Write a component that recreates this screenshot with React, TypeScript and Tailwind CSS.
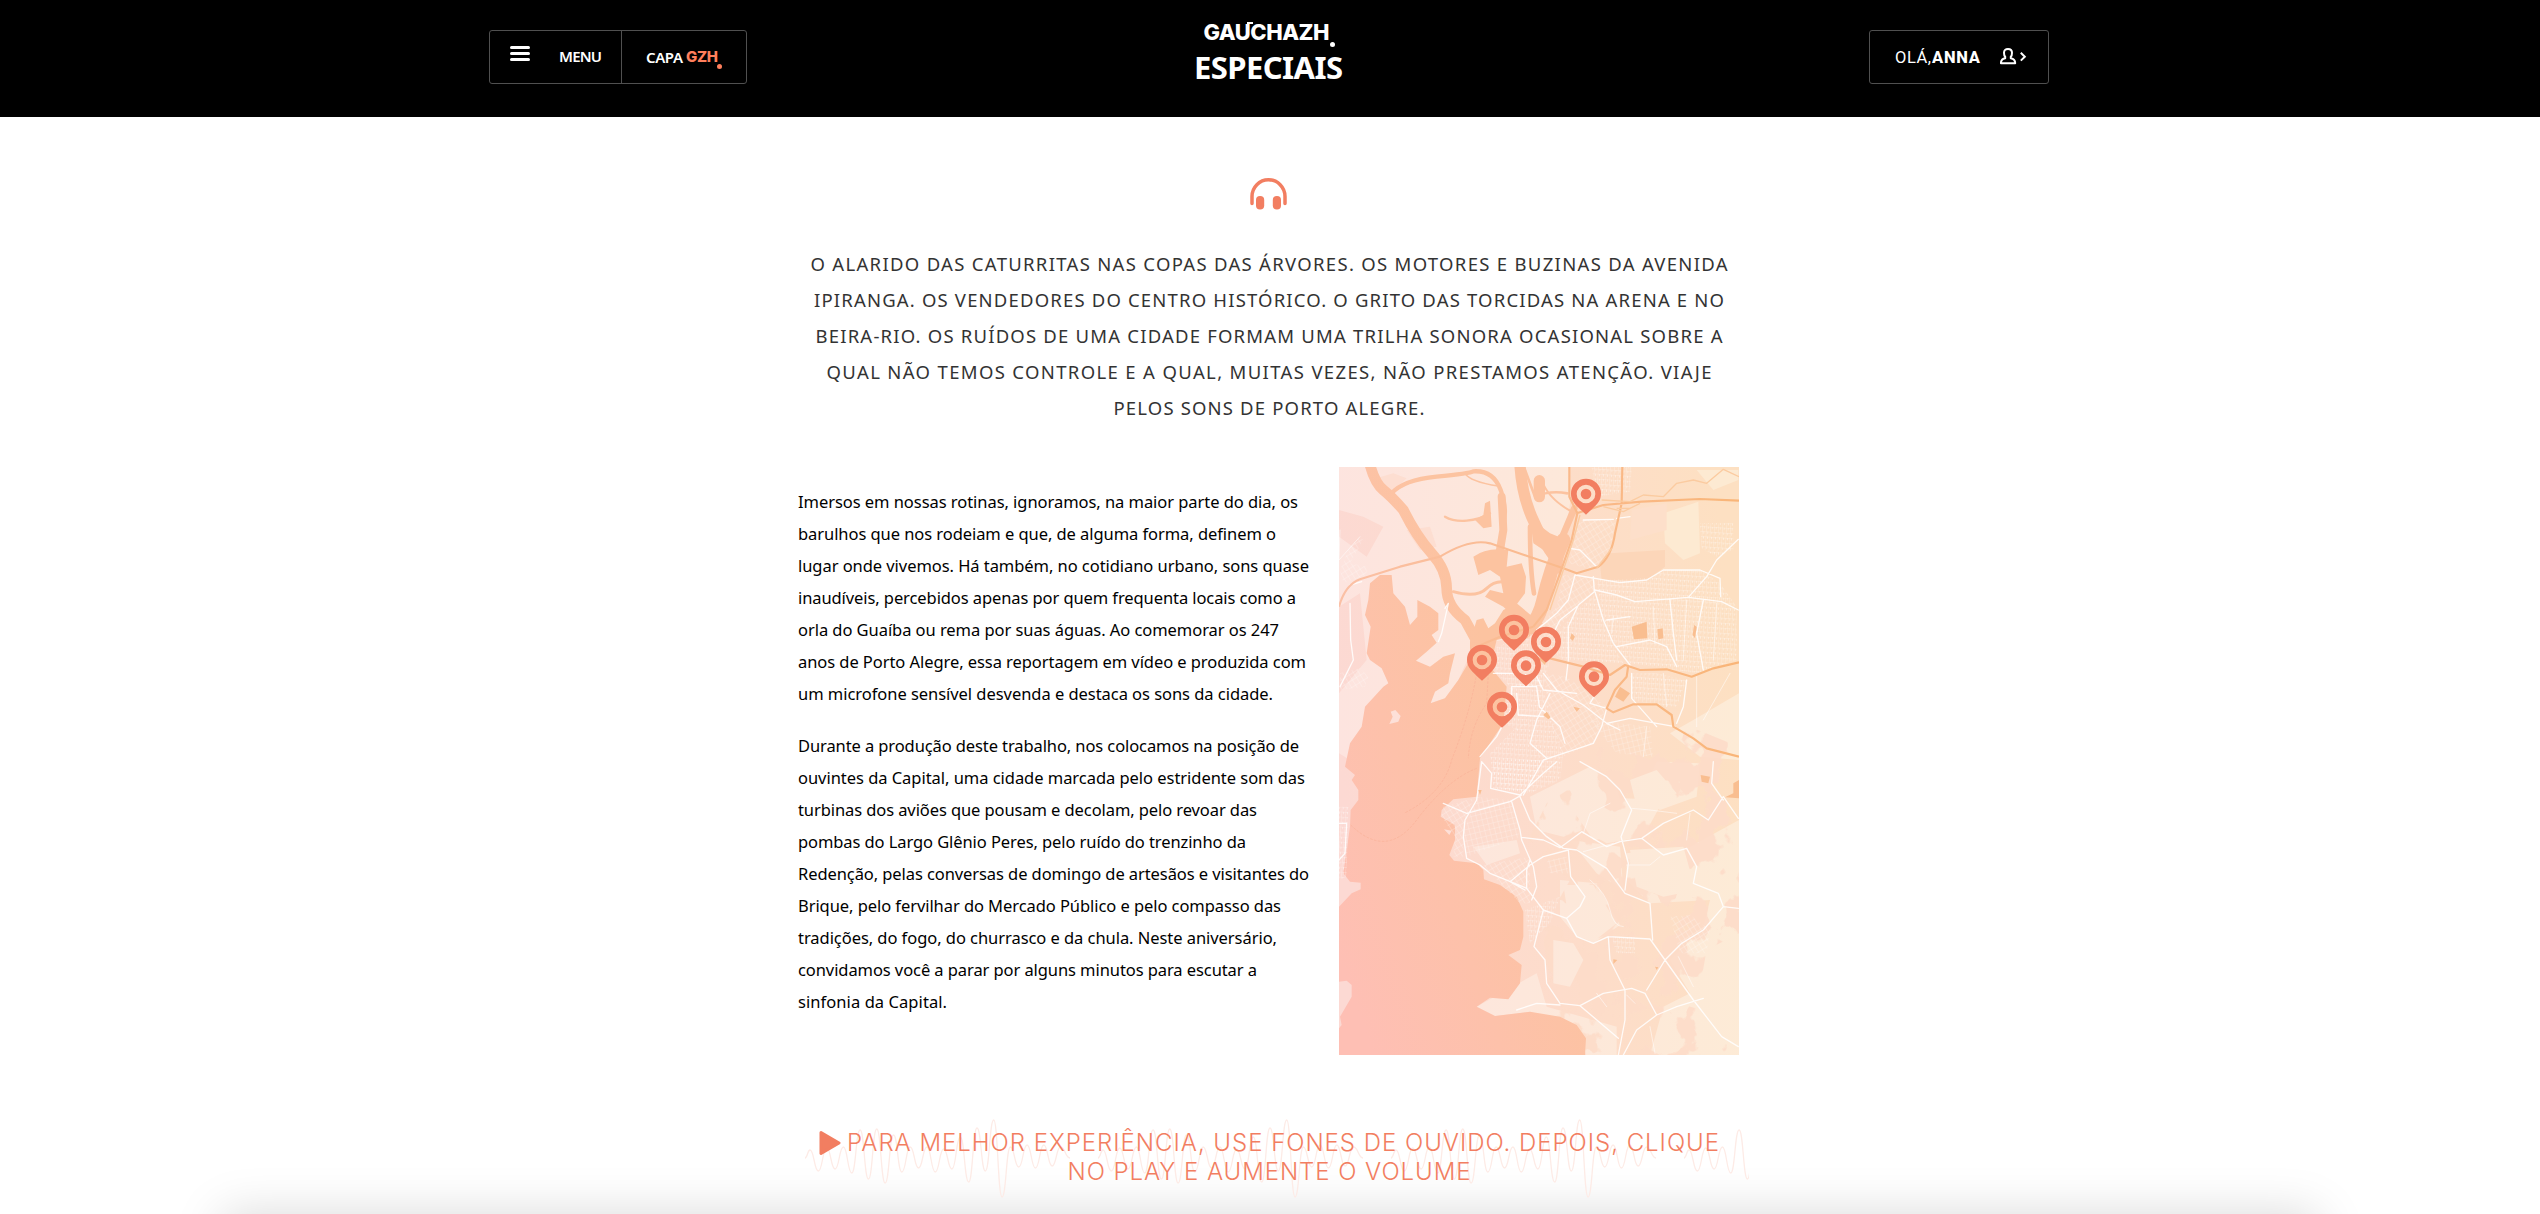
import { useLayoutEffect, useRef } from "react";

/* One line of text whose tracking is adjusted so that it fills the given width. */
function Fit({ w, children, className = "" }: { w: number; children: string; className?: string }) {
  const ref = useRef<HTMLSpanElement>(null);
  useLayoutEffect(() => {
    const el = ref.current;
    if (!el) return;
    el.style.letterSpacing = "0px";
    const natural = el.getBoundingClientRect().width;
    const gap = (w - natural) / Math.max(1, children.length - 1);
    el.style.letterSpacing = `${gap}px`;
    el.style.marginRight = `${-gap}px`;
  }, [w, children]);
  return (
    <span ref={ref} className={`inline-block whitespace-nowrap ${className}`}>
      {children}
    </span>
  );
}

const intro: [string, number][] = [
  ["O ALARIDO DAS CATURRITAS NAS COPAS DAS ÁRVORES. OS MOTORES E BUZINAS DA AVENIDA", 917],
  ["IPIRANGA. OS VENDEDORES DO CENTRO HISTÓRICO. O GRITO DAS TORCIDAS NA ARENA E NO", 910],
  ["BEIRA-RIO. OS RUÍDOS DE UMA CIDADE FORMAM UMA TRILHA SONORA OCASIONAL SOBRE A", 907],
  ["QUAL NÃO TEMOS CONTROLE E A QUAL, MUITAS VEZES, NÃO PRESTAMOS ATENÇÃO. VIAJE", 885],
  ["PELOS SONS DE PORTO ALEGRE.", 311],
];

const paragraphs: [string, number][][] = [
  [
    ["Imersos em nossas rotinas, ignoramos, na maior parte do dia, os", 500],
    ["barulhos que nos rodeiam e que, de alguma forma, definem o", 478],
    ["lugar onde vivemos. Há também, no cotidiano urbano, sons quase", 511],
    ["inaudíveis, percebidos apenas por quem frequenta locais como a", 498],
    ["orla do Guaíba ou rema por suas águas. Ao comemorar os 247", 481],
    ["anos de Porto Alegre, essa reportagem em vídeo e produzida com", 508],
    ["um microfone sensível desvenda e destaca os sons da cidade.", 475],
  ],
  [
    ["Durante a produção deste trabalho, nos colocamos na posição de", 501],
    ["ouvintes da Capital, uma cidade marcada pelo estridente som das", 507],
    ["turbinas dos aviões que pousam e decolam, pelo revoar das", 459],
    ["pombas do Largo Glênio Peres, pelo ruído do trenzinho da", 448],
    ["Redenção, pelas conversas de domingo de artesãos e visitantes do", 511],
    ["Brique, pelo fervilhar do Mercado Público e pelo compasso das", 483],
    ["tradições, do fogo, do churrasco e da chula. Neste aniversário,", 479],
    ["convidamos você a parar por alguns minutos para escutar a", 459],
    ["sinfonia da Capital.", 149],
  ],
];

const pins = [
  [768, 102],
  [552, 510],
  [648, 546],
  [456, 600],
  [588, 617],
  [792, 650],
  [516, 741],
];

/* Neighbourhoods: outline and street pattern. */
const districts: [string, string][] = [
  ["M745 180L858 178L840 270L790 330L715 310Z", "url(#g2)"],
  ["M785 21L905 21L900 95L800 110Z", "url(#g1)"],
  ["M700 345L800 355L790 400L740 440L640 560L610 520L680 440Z", "url(#g2)"],
  ["M800 360L960 355L1000 330L1110 330L1170 370L1220 440L1220 600L1100 640L900 610L850 560L820 480Z", "url(#g1)"],
  ["M1110 190L1210 190L1210 270L1160 290L1115 265Z", "url(#g1)"],
  ["M740 450L800 400L850 560L880 610L700 600L650 560Z", "url(#g1)"],
  ["M500 560L610 520L660 600L640 680L540 680L490 630Z", "url(#g1)"],
  ["M540 680L630 650L660 760L560 810L520 790Z", "url(#g1)"],
  ["M640 640L710 650L830 740L790 850L700 890L660 780Z", "url(#g2)"],
  ["M560 800L660 770L700 880L690 960L600 1000L490 980L480 880Z", "url(#g1)"],
  ["M900 640L980 640L1070 660L1040 740L980 735L905 720Z", "url(#g1)"],
  ["M780 780L960 800L970 890L860 880Z", "url(#g3)"],
  ["M440 1010L545 1020L570 1130L410 1190L400 1120Z", "url(#g3)"],
  ["M340 1040L430 1015L405 1090L400 1190L370 1190L375 1130L335 1070Z", "url(#g2)"],
  ["M490 900L640 900L580 1000L490 985Z", "url(#g1)"],
  ["M460 1215L600 1190L600 1300L600 1330L570 1330L500 1260Z", "url(#g2)"],
  ["M650 1200L710 1190L715 1240L660 1240Z", "url(#g3)"],
  ["M585 1350L690 1310L660 1390L600 1450Z", "url(#g1)"],
  ["M845 1430L915 1430L915 1480L860 1480Z", "url(#g1)"],
  ["M1020 1370L1080 1365L1140 1410L1130 1480L1050 1480Z", "url(#g2)"],
  ["M27 1040L55 1040L50 1250L27 1260Z", "url(#g1)"],
  ["M60 260L90 230L100 240L60 310L110 320L110 345L40 370L30 330Z", "url(#g2)"],
  ["M30 640L90 625L115 650L105 680L30 690Z", "url(#g2)"],
];

const avenues = [
  "M795 390L860 405L915 425L1075 412L1175 425L1225 450",
  "M735 345L870 368L950 360L1000 330L1110 330L1170 355L1172 410",
  "M1075 412L1130 350L1160 300L1225 238",
  "M795 395L820 480L850 550L900 615",
  "M790 350L793 395L745 435L715 500L715 600L708 660",
  "M670 520L690 480L740 440",
  "M620 510L680 460L715 420L735 345",
  "M450 890L500 830L545 745L545 680L620 680L628 740L690 800L705 850",
  "M490 640L545 640L620 650L640 690L740 700",
  "M640 640L680 690L760 735L830 790L870 810",
  "M560 700L565 765L640 770",
  "M660 700L620 780L600 850L650 895",
  "M820 660L780 730L830 745L815 800L790 850L700 880L640 900L580 1005",
  "M830 480L900 470M860 560L960 540L1010 560L1040 620",
  "M1020 420L1030 520L1040 600",
  "M1120 420L1100 520L1120 630",
  "M905 640L905 715L980 800",
  "M1070 660L1060 740L1040 790",
  "M760 180L850 178M720 265L750 270L800 320M860 175L900 170",
  "M830 790L900 775L980 790L1035 800",
  "M60 430L62 540L70 600L30 680M60 375L95 365",
  "M345 445L355 430L335 520L325 545",
  "M455 905L440 1020L405 1080L400 1130L410 1195L450 1215L480 1240L590 1285L640 1350L710 1375L740 1430L790 1450L835 1430L960 1437L1005 1500L1090 1620L1175 1730L1225 1760",
  "M455 905L485 940L482 985L570 1005L640 940L680 905",
  "M340 1030L410 1060L540 1025L575 1005",
  "M545 1025L570 1110L575 1140L610 1220L620 1280L605 1320",
  "M570 1010L600 1080L650 1130L700 1165L740 1170L830 1225L885 1300L960 1330L968 1440",
  "M575 1132L640 1140L690 1163L755 1115L830 1160L870 1145L935 1135L1000 1090L1090 1050L1135 1080L1180 1010L1225 1075",
  "M750 905L830 950L870 990L905 1050L873 1130L895 1210L885 1290",
  "M935 1135L1000 1185L1070 1165L1100 1220L1090 1270L1165 1300L1180 1340L1120 1410L1055 1450L1005 1500L950 1590",
  "M1180 1340L1225 1345M1150 905L1145 970L1180 1020",
  "M540 1265L600 1215L640 1190L715 1170L722 1250L765 1310L750 1340L710 1375",
  "M640 1350L612 1460L645 1500L650 1570L690 1630L750 1637L865 1735",
  "M750 1637L820 1600L905 1585L945 1600L980 1665L920 1710L880 1785",
  "M835 1430L840 1500L885 1590L885 1680L865 1785",
  "M980 1665L1040 1640L1120 1615",
  "M560 1650L620 1630L690 1635",
  "M590 1285L590 1230L600 1200M540 1265L585 1290",
  "M27 1090L50 1090L45 1180L27 1200",
];

const highways = [
  "M27 440Q45 375 90 358L210 320L330 290Q420 235 480 250L700 325L740 340L805 320Q845 290 855 220L875 130L877 21",
  "M718 21L718 110L742 160L725 240L690 340L650 450L610 500",
  "M740 160L820 135L935 125L1110 117L1227 122",
  "M660 595L760 620L840 645L885 615L930 630L1010 628L1085 650L1150 625L1227 607",
  "M895 615L890 650L855 690L830 745L850 757L910 733L980 733L1025 765L1030 800L1090 835L1130 865L1227 890",
  "M440 560L510 530L610 500",
];

function MapArt() {
  return (
    <svg viewBox="27 21 1200 1764" className="block h-[588px] w-[400px]" preserveAspectRatio="none">
      <defs>
        <linearGradient id="urban" gradientUnits="userSpaceOnUse" x1="27" y1="900" x2="1227" y2="800">
          <stop offset="0" stopColor="#fcd9d3" />
          <stop offset=".5" stopColor="#fddccb" />
          <stop offset="1" stopColor="#fde0c2" />
        </linearGradient>
        <linearGradient id="land" gradientUnits="userSpaceOnUse" x1="27" y1="900" x2="1227" y2="850">
          <stop offset="0" stopColor="#fde4df" />
          <stop offset="1" stopColor="#fdebd6" />
        </linearGradient>
        <linearGradient id="water" gradientUnits="userSpaceOnUse" x1="27" y1="1500" x2="720" y2="1250">
          <stop offset="0" stopColor="#febfb4" />
          <stop offset=".5" stopColor="#fdc1aa" />
          <stop offset="1" stopColor="#fcc3a0" />
        </linearGradient>
        <linearGradient id="road" gradientUnits="userSpaceOnUse" x1="27" y1="0" x2="1227" y2="0">
          <stop offset="0" stopColor="#fbc0a5" />
          <stop offset="1" stopColor="#f9b578" />
        </linearGradient>
        <pattern id="g1" width="12" height="15" patternUnits="userSpaceOnUse" patternTransform="rotate(4)">
          <path d="M0 0H12M0 0V15M6 0V7" stroke="#fff" strokeWidth="1.7" fill="none" />
        </pattern>
        <pattern id="g2" width="14" height="18" patternUnits="userSpaceOnUse" patternTransform="rotate(-32)">
          <path d="M0 0H14M0 0V18" stroke="#fff" strokeWidth="2" fill="none" />
        </pattern>
        <pattern id="g3" width="15" height="17" patternUnits="userSpaceOnUse" patternTransform="rotate(-14)">
          <path d="M0 0H15M0 0V17" stroke="#fff" strokeWidth="1.9" fill="none" />
        </pattern>
        <filter id="patches" x="0" y="0" width="100%" height="100%" colorInterpolationFilters="sRGB">
          <feTurbulence type="fractalNoise" baseFrequency=".011 .009" numOctaves="4" seed="11" />
          <feColorMatrix values="0 0 0 0 .992  0 0 0 0 .863  0 0 0 0 .788  22 0 0 0 -11.4" />
          <feComposite in2="SourceGraphic" operator="in" />
        </filter>
      </defs>
      <rect x="27" y="21" width="1200" height="1764" fill="url(#urban)" />

      {/* open land */}
      <path
        d="M27 21H720V130L690 330L600 520L430 560L385 660L345 715L300 730L200 720L120 800L60 900L27 880V700L110 600L90 400L27 440V230L110 290L160 200L100 170L27 150Z"
        fill="url(#land)"
      />
      <path
        d="M600 1010L700 960L780 920L860 980L880 1060L760 1110L700 1130L620 1110ZM890 1180L1080 1160L1227 1080V1785H960L1000 1640L1080 1600L1020 1500L1120 1400L1140 1320L960 1330L890 1260ZM980 905L1110 910L1100 1010L990 1050L930 1010ZM430 1160L560 1140L570 1180L470 1215ZM690 1260L800 1270L870 1395L790 1450L740 1430L690 1370ZM440 1640L620 1540L650 1640L860 1700L860 1785H768L745 1700L600 1655L495 1668ZM1090 780L1227 700V900L1110 890L1020 820ZM720 1140L870 1160L880 1290L800 1240ZM780 1010L1000 1020L940 1130L830 1150L760 1110Z"
        fill="url(#land)"
      />
      <path
        d="M590 1150L650 1030L760 960L820 840L960 900L1080 800L1227 860V1785H770L650 1650L640 1400L720 1260Z"
        fill="#fff"
        opacity=".9"
        filter="url(#patches)"
      />
      <path
        d="M735 1060Q760 1010 800 1030T880 1080L880 1130L790 1140ZM900 1170L1060 1160L1085 1250L1100 1290L1000 1310L920 1280ZM700 1275L790 1275L860 1390L790 1445L745 1430L715 1370ZM1130 1470L1227 1420V1700L1170 1680L1110 1580ZM670 1440L730 1450L760 1500L720 1580L670 1570ZM900 960L980 930L1040 1000L980 1040L920 1040Z"
        fill="url(#land)"
      />
      <path d="M1000 160L1105 125L1110 280L1060 300L1005 250ZM1100 30L1225 30L1225 60L1150 90Z" fill="#fdead2" />
      <path d="M120 60L190 40L230 55L180 100ZM230 210L300 200L320 260L270 270Z" fill="#fdded1" />
      <path d="M810 310L840 280L1005 270V320L950 360L815 362Z" fill="#fcd6b9" />
      <path d="M1010 130V210L900 240L905 150Z" fill="#fddfca" />

      {/* rivers and channels */}
      <g stroke="url(#water)" fill="none" strokeLinecap="round" strokeLinejoin="round">
        <path d="M120 15Q135 70 160 90T220 150Q260 230 305 280T350 385T405 480L460 580" strokeWidth="32" />
        <path d="M185 100Q220 60 320 50T430 34Q490 30 512 90T518 200L515 300" strokeWidth="13" />
        <path d="M515 110L520 210L505 300" strokeWidth="24" />
        <path d="M405 40Q420 65 505 78" strokeWidth="5" />
        <path d="M570 15Q575 100 605 170T680 300" strokeWidth="34" />
        <path d="M700 240Q660 330 640 420T550 530" strokeWidth="42" />
        <path d="M733 145L695 235Q700 260 680 290" strokeWidth="20" />
        <path d="M600 200Q600 330 612 400" strokeWidth="14" />
        <path d="M585 30L615 110Q660 90 712 100" strokeWidth="8" />
        <path d="M628 62V110" strokeWidth="34" />
        <path d="M635 60Q655 120 735 160" strokeWidth="6" />
        <path d="M345 170Q370 185 410 182T480 160" strokeWidth="7" />
        <path d="M370 395Q440 415 470 385T540 370" strokeWidth="9" />
      </g>
      <g fill="url(#water)">
        <path d="M480 122L485 200L460 205L435 180L460 165L465 130Z" />
        <path d="M430 290Q470 260 535 270L530 320L575 310L588 350L585 400L540 460L520 440L465 410L480 390L520 400L510 350L480 330L445 345Z" />
        <path d="M600 175L660 220L710 240L690 350L655 280L610 250Z" />
        <path d="M420 545L440 480L460 475L475 505L495 490L520 450L560 430L620 480L640 490L600 515L500 540L480 620L530 680L520 790L450 895L440 1010L370 1018L335 1050L332 1070L375 1095L375 1140L358 1185L372 1202L440 1210L460 1230L462 1258L510 1275L560 1310L580 1355L580 1430L570 1470L535 1485L575 1515L570 1570L535 1618L480 1613L440 1640L495 1668L600 1655L690 1670L740 1695L768 1735L765 1785H27V1705L35 1695L30 1670L65 1610L65 1575L50 1562L27 1565V1340L65 1300L92 1288V1268L60 1265L40 1240L60 1100L62 1050L85 1020V990L65 960L75 945L45 920L60 850L95 800L105 740L160 680L175 670L155 625L120 600L110 580L122 500L105 465L115 420L120 370L150 345L185 345L190 400L225 440L240 495L262 470L262 420L300 440L325 460L325 510L305 525L320 548L290 575L258 602L300 620L340 590L375 580L360 640L355 670L315 695L302 730L345 715L385 660L420 600Z" />
      </g>
      <path d="M178 792L188 770L182 755L196 750L212 768L205 785ZM342 1108L365 1112L358 1125Z" fill="#fde0d8" />
      <path d="M475 640L470 730Q420 800 415 895M440 640Q420 760 365 900Q340 1000 222 1060M440 925Q350 960 260 1080T62 1095" stroke="#f9b197" strokeWidth="2" fill="none" strokeDasharray="8 4" />

      {/* streets */}
      {districts.map(([d, fill], i) => (
        <path key={i} d={d} fill={fill} opacity=".6" />
      ))}
      <g fill="none" stroke="#fff" strokeLinejoin="round" strokeLinecap="round">
        <path d={avenues.join("")} strokeWidth="4" opacity=".85" />
        <path
          d="M760 1175L850 1150M890 1215L960 1215L990 1190M1070 1140L1080 1060M905 1045L960 1050L1040 1060M780 1260Q830 1300 840 1350T880 1400M840 1030L780 1060L760 1120M800 1600L830 1640M890 1605L915 1630M960 1700L975 1780M1045 1490L1090 1580M1100 650L1100 800M1200 640L1120 780M950 800L940 890M1000 640L1010 740M850 470L845 520M970 440L975 550M1070 420L1060 600M1160 430L1150 600M30 210L27 300L90 230"
          strokeWidth="2.2"
          opacity=".7"
        />
      </g>

      {/* parks */}
      <path
        d="M905 500L950 485L952 535L912 538ZM982 508L998 505L1000 535L985 538ZM1092 495L1100 500L1095 535L1088 525ZM725 520L735 530L728 542L720 535ZM870 680L900 700L880 725L855 710ZM640 765L650 755L662 772L655 778ZM730 740L750 745L740 755ZM620 590L650 600L645 615ZM1112 945L1140 950L1135 970L1115 965ZM1210 970L1227 960V1015L1185 1012L1210 1000ZM850 1498L862 1500L850 1512ZM975 1520L985 1522L980 1530ZM445 990L455 990L450 1005Z"
        fill="#f9be90"
      />

      {/* highways */}
      <path d={highways.join("")} fill="none" stroke="url(#road)" strokeWidth="6.5" strokeLinejoin="round" />
      <path
        d="M815 120L900 125L940 105L1000 110L1040 70L1090 60L1130 70L1180 28L1227 50M750 165L730 240L700 330L660 450M820 140L880 155L930 130M845 265L800 325M860 145H900"
        fill="none"
        stroke="#fbcba0"
        strokeWidth="4"
        strokeLinejoin="round"
      />

      {pins.map(([x, y], i) => (
        <g key={i} transform={`translate(${x} ${y})`}>
          <path
            fillRule="evenodd"
            fill="#f27e61"
            d="M-45 -1A45 45 0 1 1 45 -1C45 20 34 31 0 62C-34 31 -45 20 -45 -1ZM-28 0A28 28 0 1 0 28 0A28 28 0 1 0 -28 0Z"
          />
          <circle r="16" fill="#f27e61" />
        </g>
      ))}
    </svg>
  );
}

/* Successive crests and troughs of one repeat of the sound wave, 8.35px apart. */
const crests = [-8, 13, -10, 11, -11, 15, -28, 21, -29, 25, -23, 14, -11, 10, -11, 14, -9, 11, -21, 24, -30, 13, -38, 39, -11, 9, -13, 10, -13, 8, -11];

function wavePath() {
  let d = "";
  for (let r = 0; r < 4; r++) {
    const x0 = r * 293;
    let px = x0;
    let py = 48;
    d += `M${px} ${py}`;
    const pts = crests.map((c, i) => [x0 + 5 + i * 8.35, 48 + c]);
    pts.push([x0 + 265, 48]);
    for (const [x, y] of pts) {
      const m = (px + x) / 2;
      d += `C${m} ${py} ${m} ${y} ${x} ${y}`;
      px = x;
      py = y;
    }
  }
  return d;
}

export default function App() {
  return (
    <div className="flex h-[1214px] w-full flex-col items-center overflow-hidden bg-white font-['Noto_Sans',sans-serif]">
      <header className="grid h-[117px] w-full shrink-0 grid-cols-3 bg-black text-white">
        <div className="pt-[30px] pl-[489px]">
          <div className="flex h-[54px] w-[258px] rounded-[3px] border border-[#505050]">
            <div className="flex w-[132px] items-start border-r border-[#505050] pl-5">
              <div className="mt-[15px] flex w-5 flex-col gap-[3px]">
                <i className="h-[3px] rounded-full bg-white" />
                <i className="h-[3px] rounded-full bg-white" />
                <i className="h-[3px] rounded-full bg-white" />
              </div>
              <div className="mt-[15px] ml-[29px] text-[15px] leading-[20px] font-semibold">
                <Fit w={43}>MENU</Fit>
              </div>
            </div>
            <div className="relative mt-4 ml-6 flex text-[15px] leading-[20px] font-semibold">
              <Fit w={37}>CAPA</Fit>
              <Fit w={32} className="ml-[3px] font-['Inter'] font-extrabold text-[#ff7f5c]">
                GZH
              </Fit>
              <i className="absolute top-[17px] left-[71px] size-[5px] rounded-full bg-[#ff7f5c]" />
            </div>
          </div>
        </div>
        <div className="flex flex-col items-center pt-[20px] pr-[3px]">
          <div className="relative mr-[4px] font-['Inter'] text-[22px] leading-[24px] font-extrabold">
            <Fit w={126}>GAUCHAZH</Fit>
            <i className="absolute top-[2px] left-[44px] h-[1.5px] w-[6px] bg-white" />
            <i className="absolute top-[22px] left-[127px] size-[5px] rounded-full bg-white" />
          </div>
          <div className="mt-[6px] text-[31px] leading-[34px] font-bold">
            <Fit w={149}>ESPECIAIS</Fit>
          </div>
        </div>
        <div className="flex justify-end pt-[30px] pr-[491px]">
          <div className="flex h-[54px] w-[180px] rounded-[3px] border border-[#505050] pl-[25px] font-['Roboto']">
            <div className="mt-[16px] flex text-[16.5px] leading-[22px]">
              <Fit w={36} className="font-normal">
                OLÁ,
              </Fit>
              <Fit w={48} className="ml-px font-extrabold">
                ANNA
              </Fit>
            </div>
            <svg viewBox="0 0 28 18" className="mt-[16px] ml-5 h-[18px] w-[28px]" fill="none" stroke="#fff" strokeWidth="2">
              <path
                d="M5.2 9.8C4.2 8.8 4 7.2 4 5.8C4 3.2 5.6 1.900 8 1.900S12 3.200 12 5.800C12 7.200 11.800 8.800 10.800 9.800V11.300C13.500 11.800 15.200 13 15.200 16.200H.9C.9 13 2.600 11.800 5.200 11.300Z"
                strokeLinejoin="round"
              />
              <path d="M20.800 5.800L24.800 9.700L20.800 13.600" />
            </svg>
          </div>
        </div>
      </header>

      <main className="mr-[2px] flex w-[960px] shrink-0 flex-col">
        <svg viewBox="0 0 37 32" className="mt-[61px] mr-px h-8 w-[37px] self-center">
          <path d="M2 25.500V18.500A16.500 16.700 0 0 1 35 18.500V25.500" fill="none" stroke="#f27e61" strokeWidth="3.500" strokeLinecap="round" />
          <rect x="6" y="18" width="8.200" height="13.500" rx="4" fill="#f27e61" />
          <rect x="22.800" y="18" width="8.200" height="13.500" rx="4" fill="#f27e61" />
        </svg>

        <div className="mt-9 flex flex-col items-center text-[18.500px] leading-[36px] text-[#333333]">
          {intro.map(([t, w]) => (
            <Fit key={t} w={w}>
              {t}
            </Fit>
          ))}
        </div>

        <div className="mt-[41px] flex">
          <div className="flex w-[550px] flex-col gap-5 pt-[19px] pl-[9px] text-[16.500px] leading-[32px] text-black">
            {paragraphs.map((lines, i) => (
              <p key={i} className="flex flex-col items-start">
                {lines.map(([t, w]) => (
                  <Fit key={t} w={w}>
                    {t}
                  </Fit>
                ))}
              </p>
            ))}
          </div>
          <MapArt />
        </div>

        <div className="relative mt-[73px] font-['Inter'] text-[24px] leading-[29px] font-light text-[#f27e61]">
          <svg viewBox="0 0 944 96" className="absolute top-[-18px] left-4 h-24 w-[944px]" fill="none" stroke="#fdebe6" strokeWidth="1.300">
            <path d={wavePath()} />
          </svg>
          <div className="relative flex flex-col items-center">
            <div className="flex items-center">
              <svg viewBox="0 0 22 26" className="h-[26px] w-[22px]">
                <path d="M2 2.500L20 13L2 23.500Z" fill="#f27e61" stroke="#f27e61" strokeWidth="3" strokeLinejoin="round" />
              </svg>
              <Fit w={872} className="ml-[6px]">
                PARA MELHOR EXPERIÊNCIA, USE FONES DE OUVIDO. DEPOIS, CLIQUE
              </Fit>
            </div>
            <Fit w={403}>NO PLAY E AUMENTE O VOLUME</Fit>
          </div>
        </div>
      </main>

      <div className="mt-[28px] h-[600px] w-[2096px] shrink-0 bg-white shadow-[0_0_46px_rgba(0,0,0,0.15)]" />
    </div>
  );
}
